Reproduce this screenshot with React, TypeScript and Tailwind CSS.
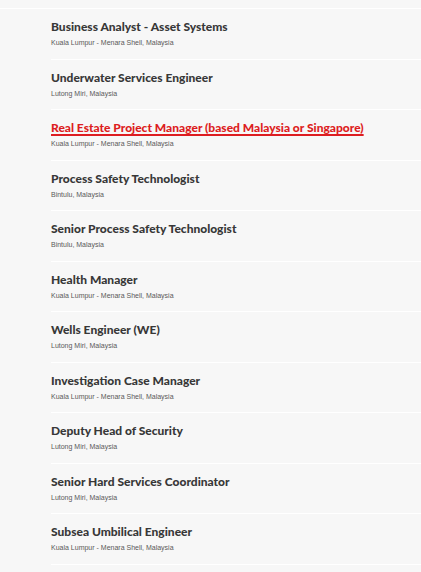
const JOBS = [
  { title: "Business Analyst - Asset Systems", location: "Kuala Lumpur - Menara Shell, Malaysia" },
  { title: "Underwater Services Engineer", location: "Lutong Miri, Malaysia" },
  { title: "Real Estate Project Manager (based Malaysia or Singapore)", location: "Kuala Lumpur - Menara Shell, Malaysia", active: true },
  { title: "Process Safety Technologist", location: "Bintulu, Malaysia" },
  { title: "Senior Process Safety Technologist", location: "Bintulu, Malaysia" },
  { title: "Health Manager", location: "Kuala Lumpur - Menara Shell, Malaysia" },
  { title: "Wells Engineer (WE)", location: "Lutong Miri, Malaysia" },
  { title: "Investigation Case Manager", location: "Kuala Lumpur - Menara Shell, Malaysia" },
  { title: "Deputy Head of Security", location: "Lutong Miri, Malaysia" },
  { title: "Senior Hard Services Coordinator", location: "Lutong Miri, Malaysia" },
  { title: "Subsea Umbilical Engineer", location: "Kuala Lumpur - Menara Shell, Malaysia" },
];

export default function App() {
  return (
    <div className="h-[572px] w-[421px] overflow-hidden bg-[#f7f7f7]">
      <div className="h-[8px]" />
      <div className="h-px bg-white" />
      <ul className="pl-[51px]">
        {JOBS.map((job) => (
          <li key={job.title} className="h-[50.5px] border-b border-white pt-[10px]">
            <a
              href="#"
              className={
                job.active
                  ? "block font-['Lato',sans-serif] text-[12px] font-black leading-[16px] text-[#dd1d21] underline decoration-[1.5px] underline-offset-2"
                  : "block font-['Lato',sans-serif] text-[12px] font-black leading-[16px] text-[#383838]"
              }
            >
              {job.title}
            </a>
            <p className="mt-[3px] font-['Liberation_Sans',Arial,sans-serif] text-[7px] leading-[9px] text-[#595959]">
              {job.location}
            </p>
          </li>
        ))}
      </ul>
    </div>
  );
}
